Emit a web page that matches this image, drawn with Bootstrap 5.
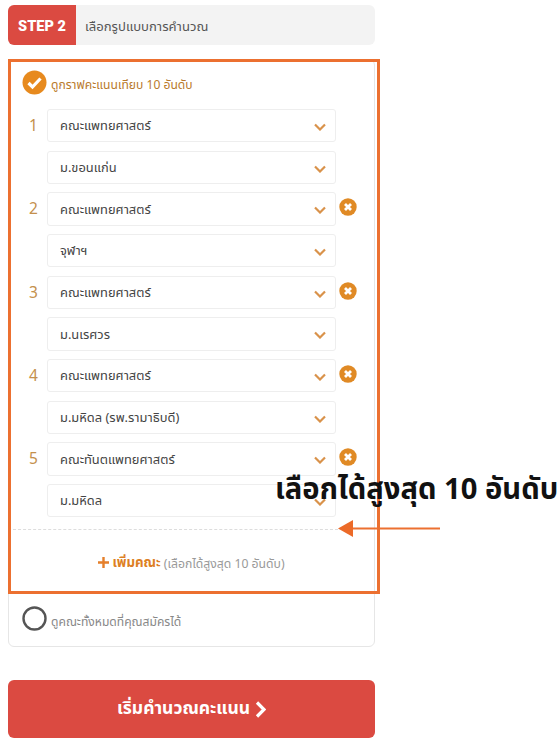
<!doctype html>
<html lang="th">
<head>
<meta charset="utf-8">
<link href="https://cdn.jsdelivr.net/npm/bootstrap@5.3.0/dist/css/bootstrap.min.css" rel="stylesheet">
<style>
html,body{height:100%;}
body{font-family:"Noto Sans Thai","Noto Sans","Liberation Sans",sans-serif;background:#fff;overflow:hidden;position:relative;}
.page-col{width:367px;margin-left:8px;padding-top:5px;}
.step-bar{height:40px;background:#f3f3f3;border-radius:6px;overflow:hidden;}
.step-tag{width:68px;background:#db4a41;color:#fff;font-weight:900;font-size:14.5px;padding-top:3px;font-family:Roboto,"Liberation Sans",sans-serif;}
.step-title{font-size:13.1px;color:#555;padding-left:9px;padding-top:6px;}
.opt-card{margin-top:14px;border:1px solid #e6e6e6;border-radius:6px;height:588px;padding:10px 13px 0;}
.radio-on{width:25px;height:25px;flex:none;}
.opt-label{font-size:12.1px;color:#b97a2c;margin-left:4px;padding-top:6px;}
.opt-label-off{color:#888;}
.rows-wrap{margin-top:14px;}
.pair-row{display:flex;align-items:flex-start;margin-bottom:8.33px;}
.num-cell{width:25px;flex:none;color:#c4904d;font-size:15.5px;line-height:33px;padding-left:7px;font-family:"Noto Sans",sans-serif;}
.pick{width:289px;height:33.33px;flex:none;border:1px solid #eee;border-radius:3px;font-size:12.9px;color:#444;padding:3px 9px 0 12px;}
.del-cell{width:18px;height:18px;margin-left:3px;margin-top:6px;flex:none;}
.dash-line{border-top:1px dashed #ddd;margin:12px 23px 0 -9px;}
.add-line{margin-top:20px;font-size:12.2px;color:#999;display:flex;justify-content:center;align-items:center;gap:3px;}
.add-line b{color:#dd7f24;font-size:13.3px;}
.add-line span{padding-top:3px;}
.off-row{margin-top:32px;}
.go-btn{display:flex;align-items:center;justify-content:center;gap:5px;width:100%;height:58px;margin-top:33px;background:#db4a41;border:0;border-radius:6px;color:#fff;font-size:17.5px;font-weight:700;}
.go-btn:hover{background:#db4a41;color:#fff;}
.frame-over{position:absolute;left:8px;top:59px;width:372px;height:535px;border:3px solid #ec7030;pointer-events:none;}
.note-over{position:absolute;left:275px;top:471px;font-size:29.2px;font-weight:700;color:#111;white-space:nowrap;line-height:38px;}
.arrow-over{position:absolute;left:336px;top:519px;width:106px;height:20px;}
</style>
</head>
<body>
<div class="page-col">
  <div class="step-bar d-flex">
    <div class="step-tag d-flex align-items-center justify-content-center">STEP 2</div>
    <div class="step-title d-flex align-items-center">เลือกรูปแบบการคำนวณ</div>
  </div>

  <div class="opt-card">
    <div class="d-flex align-items-center">
      <svg class="radio-on" viewBox="0 0 25 25"><circle cx="12.5" cy="12.5" r="12" fill="#e78a1e"/><path d="M6.5 13l4 4 8-8.5" fill="none" stroke="#fff" stroke-width="3.2"/></svg>
      <span class="opt-label">ดูกราฟคะแนนเทียบ 10 อันดับ</span>
    </div>

    <div class="rows-wrap">
      <div class="pair-row"><div class="num-cell">1</div><div class="pick d-flex align-items-center justify-content-between"><span>คณะแพทยศาสตร์</span><svg width="12" height="8" viewBox="0 0 12 8"><path d="M1 1.5l5 5 5-5" fill="none" stroke="#d9924a" stroke-width="2.2"/></svg></div></div>
      <div class="pair-row"><div class="num-cell"></div><div class="pick d-flex align-items-center justify-content-between"><span>ม.ขอนแก่น</span><svg width="12" height="8" viewBox="0 0 12 8"><path d="M1 1.5l5 5 5-5" fill="none" stroke="#d9924a" stroke-width="2.2"/></svg></div></div>

      <div class="pair-row"><div class="num-cell">2</div><div class="pick d-flex align-items-center justify-content-between"><span>คณะแพทยศาสตร์</span><svg width="12" height="8" viewBox="0 0 12 8"><path d="M1 1.5l5 5 5-5" fill="none" stroke="#d9924a" stroke-width="2.2"/></svg></div><svg class="del-cell" viewBox="0 0 18 18"><circle cx="9" cy="9" r="8.7" fill="#e08a25"/><path d="M6 6l6 6M12 6l-6 6" stroke="#fff" stroke-width="2.8"/></svg></div>
      <div class="pair-row"><div class="num-cell"></div><div class="pick d-flex align-items-center justify-content-between"><span>จุฬาฯ</span><svg width="12" height="8" viewBox="0 0 12 8"><path d="M1 1.5l5 5 5-5" fill="none" stroke="#d9924a" stroke-width="2.2"/></svg></div></div>

      <div class="pair-row"><div class="num-cell">3</div><div class="pick d-flex align-items-center justify-content-between"><span>คณะแพทยศาสตร์</span><svg width="12" height="8" viewBox="0 0 12 8"><path d="M1 1.5l5 5 5-5" fill="none" stroke="#d9924a" stroke-width="2.2"/></svg></div><svg class="del-cell" viewBox="0 0 18 18"><circle cx="9" cy="9" r="8.7" fill="#e08a25"/><path d="M6 6l6 6M12 6l-6 6" stroke="#fff" stroke-width="2.8"/></svg></div>
      <div class="pair-row"><div class="num-cell"></div><div class="pick d-flex align-items-center justify-content-between"><span>ม.นเรศวร</span><svg width="12" height="8" viewBox="0 0 12 8"><path d="M1 1.5l5 5 5-5" fill="none" stroke="#d9924a" stroke-width="2.2"/></svg></div></div>

      <div class="pair-row"><div class="num-cell">4</div><div class="pick d-flex align-items-center justify-content-between"><span>คณะแพทยศาสตร์</span><svg width="12" height="8" viewBox="0 0 12 8"><path d="M1 1.5l5 5 5-5" fill="none" stroke="#d9924a" stroke-width="2.2"/></svg></div><svg class="del-cell" viewBox="0 0 18 18"><circle cx="9" cy="9" r="8.7" fill="#e08a25"/><path d="M6 6l6 6M12 6l-6 6" stroke="#fff" stroke-width="2.8"/></svg></div>
      <div class="pair-row"><div class="num-cell"></div><div class="pick d-flex align-items-center justify-content-between"><span>ม.มหิดล (รพ.รามาธิบดี)</span><svg width="12" height="8" viewBox="0 0 12 8"><path d="M1 1.5l5 5 5-5" fill="none" stroke="#d9924a" stroke-width="2.2"/></svg></div></div>

      <div class="pair-row"><div class="num-cell">5</div><div class="pick d-flex align-items-center justify-content-between"><span>คณะทันตแพทยศาสตร์</span><svg width="12" height="8" viewBox="0 0 12 8"><path d="M1 1.5l5 5 5-5" fill="none" stroke="#d9924a" stroke-width="2.2"/></svg></div><svg class="del-cell" viewBox="0 0 18 18"><circle cx="9" cy="9" r="8.7" fill="#e08a25"/><path d="M6 6l6 6M12 6l-6 6" stroke="#fff" stroke-width="2.8"/></svg></div>
      <div class="pair-row"><div class="num-cell"></div><div class="pick d-flex align-items-center justify-content-between"><span>ม.มหิดล</span><svg width="12" height="8" viewBox="0 0 12 8"><path d="M1 1.5l5 5 5-5" fill="none" stroke="#d9924a" stroke-width="2.2"/></svg></div></div>
    </div>

    <div class="dash-line"></div>
    <div class="add-line"><svg width="11" height="11" viewBox="0 0 11 11"><path d="M5.5 0v11M0 5.5h11" stroke="#e57f2a" stroke-width="2.4"/></svg><b class="pt-1">เพิ่มคณะ</b><span>(เลือกได้สูงสุด 10 อันดับ)</span></div>

    <div class="off-row d-flex align-items-center">
      <svg class="radio-on" viewBox="0 0 25 25"><circle cx="12.5" cy="12.5" r="11" fill="#fff" stroke="#555" stroke-width="2.4"/></svg>
      <span class="opt-label opt-label-off">ดูคณะทั้งหมดที่คุณสมัครได้</span>
    </div>
  </div>

  <button type="button" class="btn go-btn">เริ่มคำนวณคะแนน <svg width="11" height="17" viewBox="0 0 11 17"><path d="M2 1.5L9 8.5 2 15.5" fill="none" stroke="#fff" stroke-width="3.2"/></svg></button>
</div>

<div class="frame-over"></div>
<div class="note-over">เลือกได้สูงสุด 10 อันดับ</div>
<svg class="arrow-over" viewBox="0 0 106 20"><path d="M104 9.5H14" stroke="#ec7030" stroke-width="2"/><path d="M2 9.5L17 1v17z" fill="#ec6a28"/></svg>
</body>
</html>
